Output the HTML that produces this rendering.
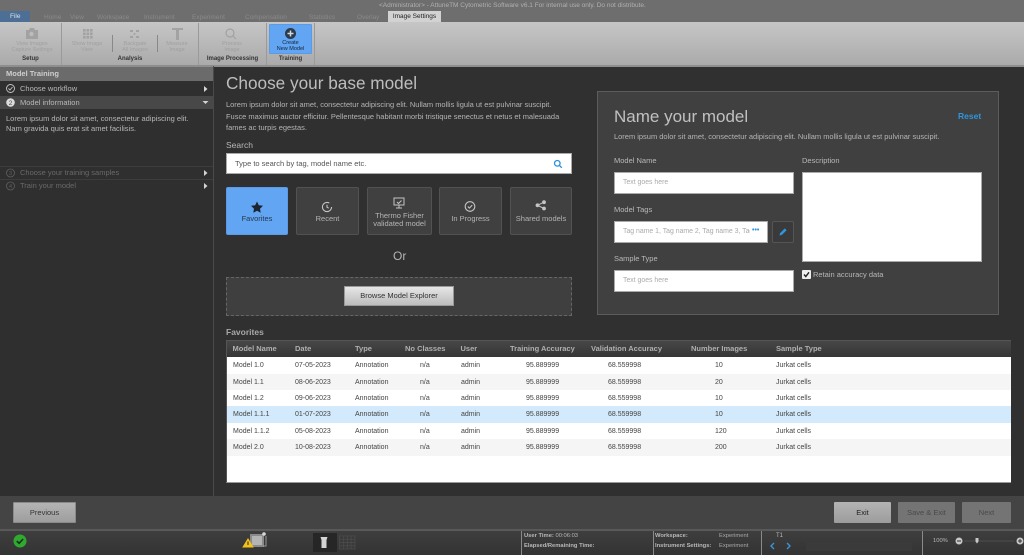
<!DOCTYPE html>
<html><head><meta charset="utf-8">
<style>
*{box-sizing:border-box}
html,body{margin:0;padding:0;width:1024px;height:555px;overflow:hidden;background:#303030;font-family:"Liberation Sans",sans-serif}
#w{position:absolute;left:0;top:0;width:1024px;height:555px;overflow:hidden;filter:blur(.35px)}
.a{position:absolute;white-space:nowrap}
.tab{position:absolute;top:13px;font-size:6.5px;color:#8a8a8a;line-height:9px}
.rb{position:absolute;font-size:5.5px;line-height:6px;color:#a0a0a0;text-align:center;white-space:nowrap}
.rg{position:absolute;top:55px;font-size:6px;font-weight:bold;color:#333;line-height:9px;white-space:nowrap;text-align:center}
.sep{position:absolute;top:23px;width:1px;height:42px;background:#9a9a9a}
.lbl{position:absolute;font-size:7.5px;color:#b8b8b8;white-space:nowrap;line-height:10px}
.inp{position:absolute;background:#fff;border:1px solid #aaa}
.ph{position:absolute;font-size:6.9px;color:#aaa;line-height:10px;white-space:nowrap}
.cat{position:absolute;top:187px;height:48px;background:#404040;border:1px solid #525252;border-radius:2px;color:#b4b4b4;font-size:7.5px;line-height:8px;text-align:center}
.cat span{position:absolute;left:0;right:0}
.row{position:absolute;left:227px;width:784px;height:16.5px;font-size:7px;color:#444;line-height:17px}
.row span,.hd span{position:absolute;white-space:nowrap}
.btn{position:absolute;top:502px;height:21px;font-size:7.5px;line-height:21px;text-align:center;border-radius:1px}
.c3{left:128px}.c4{left:193px}.c5{left:234px}.c6{left:299px}.c7{left:381px}.c8{left:488px}.c9{left:549px}
</style></head>
<body><div id="w">
<!-- title + tabs -->
<div class="a" style="left:0;top:0;width:1024px;height:22px;background:#6e6e6e"></div>
<div class="a" style="left:379px;top:2px;font-size:6.5px;color:#b0b0b0;line-height:8px">&lt;Administrator&gt; - AttuneTM Cytometric Software v6.1 For internal use only. Do not distribute.</div>
<div class="a" style="left:0;top:11px;width:30px;height:11px;background:#4d6f96"></div>
<div class="a" style="left:10px;top:12px;font-size:6.5px;color:#d8e2ee;line-height:9px">File</div>
<div class="tab" style="left:44px">Home</div>
<div class="tab" style="left:70px">View</div>
<div class="tab" style="left:97px">Workspace</div>
<div class="tab" style="left:144px">Instrument</div>
<div class="tab" style="left:192px">Experiment</div>
<div class="tab" style="left:245px">Compensation</div>
<div class="tab" style="left:309px">Statistics</div>
<div class="tab" style="left:357px">Overlay</div>
<div class="a" style="left:388px;top:11px;width:53px;height:11px;background:#d2d2d2;color:#222;font-size:6.5px;line-height:11px;text-align:center">Image Settings</div>

<!-- ribbon -->
<div class="a" style="left:0;top:22px;width:1024px;height:43px;background:linear-gradient(#c6c6c6,#aaaaaa)"></div>
<div class="a" style="left:0;top:65px;width:1024px;height:2px;background:#8e8e8e"></div>
<div class="sep" style="left:61px"></div><div class="sep" style="left:198px"></div><div class="sep" style="left:266px"></div><div class="sep" style="left:314px"></div>
<div class="sep" style="left:112px;top:35px;height:17px;background:#888"></div><div class="sep" style="left:157px;top:35px;height:17px;background:#888"></div>
<svg class="a" style="left:0;top:22px" width="200" height="20" viewBox="0 0 200 20" fill="#a2a2a2">
<path d="M26 8h3l1-2h4l1 2h3v9H26z"/><circle cx="31.500" cy="12" r="2.200" fill="#bcbcbc"/>
<g><rect x="83" y="7" width="2.600" height="2.600"/><rect x="86.500" y="7" width="2.600" height="2.600"/><rect x="90" y="7" width="2.600" height="2.600"/><rect x="83" y="10.500" width="2.600" height="2.600"/><rect x="86.500" y="10.500" width="2.600" height="2.600"/><rect x="90" y="10.500" width="2.600" height="2.600"/><rect x="83" y="14" width="2.600" height="2.600"/><rect x="86.500" y="14" width="2.600" height="2.600"/><rect x="90" y="14" width="2.600" height="2.600"/></g>
<g><rect x="130" y="8" width="3" height="2"/><rect x="136" y="8" width="3" height="2"/><rect x="130" y="14" width="3" height="2"/><rect x="136" y="14" width="3" height="2"/><circle cx="134.500" cy="12" r="1"/></g>
<path d="M172 6h11v2h-4v10h-3V8h-4z"/>
</svg>
<svg class="a" style="left:222px;top:27px" width="18" height="14" viewBox="0 0 18 14" fill="none" stroke="#a2a2a2" stroke-width="1.200"><circle cx="8" cy="6" r="4"/><path d="M11 9l3 3"/></svg>
<div class="rb" style="left:10px;top:41px;width:44px">View Images<br>Capture Settings</div>
<div class="rb" style="left:67px;top:41px;width:40px">Show Image<br>View</div>
<div class="rb" style="left:115px;top:41px;width:40px">Backgate<br>All Images</div>
<div class="rb" style="left:158px;top:41px;width:38px">Measure<br>Image</div>
<div class="rb" style="left:212px;top:41px;width:40px">Process<br>Image</div>
<div class="rg" style="left:0;width:61px">Setup</div>
<div class="rg" style="left:62px;width:136px">Analysis</div>
<div class="rg" style="left:199px;width:67px">Image Processing</div>
<div class="rg" style="left:267px;width:47px">Training</div>
<div class="a" style="left:269px;top:24px;width:43px;height:30px;background:#62a5f3;border:1px solid #5a9ae6;border-radius:1px"></div>
<svg class="a" style="left:284px;top:27px" width="13" height="13" viewBox="0 0 13 13"><circle cx="6.500" cy="6.500" r="5.500" fill="#2c3a4a"/><path d="M6.500 3.500v6M3.500 6.500h6" stroke="#cfd8e2" stroke-width="1.500"/></svg>
<div class="rb" style="left:269px;top:40px;width:43px;color:#10233a">Create<br>New Model</div>

<!-- left panel -->
<div class="a" style="left:0;top:67px;width:213px;height:429px;background:#2f2f2f"></div>
<div class="a" style="left:213px;top:66px;width:1px;height:430px;background:#4a4a4a"></div>
<div class="a" style="left:0;top:67px;width:213px;height:14px;background:#6b6b6b;color:#cfcfcf;font-size:7.5px;font-weight:bold;line-height:14px;padding-left:6px">Model Training</div>
<div class="a" style="left:0;top:81px;width:213px;height:15px;background:#2f2f2f;color:#b8b8b8;font-size:7.5px;line-height:15px;padding-left:20px">Choose workflow</div>
<div class="a" style="left:0;top:96px;width:213px;height:13px;background:#484848;color:#b8b8b8;font-size:7.500px;line-height:13px;padding-left:20px">Model information</div>
<div class="a" style="left:6px;top:114px;font-size:7.5px;line-height:10px;color:#b8b8b8">Lorem ipsum dolor sit amet, consectetur adipiscing elit.<br>Nam gravida quis erat sit amet facilisis.</div>
<div class="a" style="left:0;top:166px;width:213px;height:1px;background:#3d3d3d"></div>
<div class="a" style="left:0;top:179px;width:213px;height:1px;background:#3d3d3d"></div>
<div class="a" style="left:20px;top:168px;color:#696969;font-size:7.5px;line-height:10px">Choose your training samples</div>
<div class="a" style="left:20px;top:181px;color:#696969;font-size:7.5px;line-height:10px">Train your model</div>
<svg class="a" style="left:0;top:81px" width="213" height="112" viewBox="0 0 213 112">
<g fill="none" stroke="#c4c4c4" stroke-width=".9"><circle cx="10.500" cy="7.500" r="4"/><path d="M8.500 7.500l1.500 1.500 2.500-3"/></g>
<circle cx="10.500" cy="21.500" r="4.300" fill="#dcdcdc"/><text x="10.500" y="24" font-size="6.500" font-family="Liberation Sans" text-anchor="middle" fill="#484848">2</text>
<g fill="none" stroke="#5f5f5f" stroke-width=".8"><circle cx="10.500" cy="92" r="4"/><circle cx="10.500" cy="105" r="4"/></g>
<text x="10.500" y="94" font-size="5.500" font-family="Liberation Sans" text-anchor="middle" fill="#5f5f5f">3</text><text x="10.500" y="107" font-size="5.500" font-family="Liberation Sans" text-anchor="middle" fill="#5f5f5f">4</text>
<g fill="#d4d4d4"><path d="M204 5l3.500 3-3.500 3z"/><path d="M204 89l3.500 3-3.500 3z"/><path d="M204 102l3.500 3-3.500 3z"/><path d="M202.500 20h6l-3 3z"/></g>
</svg>

<!-- main -->
<div class="a" style="left:226px;top:73px;font-size:17.200px;line-height:20px;color:#bdbdbd">Choose your base model</div>
<div class="a" style="left:226px;top:99px;font-size:7.470px;line-height:11.500px;color:#b4b4b4">Lorem ipsum dolor sit amet, consectetur adipiscing elit. Nullam mollis ligula ut est pulvinar suscipit.<br>Fusce maximus auctor efficitur. Pellentesque habitant morbi tristique senectus et netus et malesuada<br>fames ac turpis egestas.</div>
<div class="lbl" style="left:226px;top:140px;font-size:8.500px">Search</div>
<div class="inp" style="left:226px;top:153px;width:346px;height:21px"></div>
<div class="a" style="left:235px;top:158px;font-size:7.500px;line-height:11px;color:#555">Type to search by tag, model name etc.</div>
<svg class="a" style="left:553px;top:159px" width="10" height="10" viewBox="0 0 10 10" fill="none" stroke="#2f8fd8" stroke-width="1.300"><circle cx="4.300" cy="4.300" r="2.800"/><path d="M6.500 6.500l2.300 2.300"/></svg>

<div class="cat" style="left:226px;width:62px;background:#62a5f3;border-color:#5a9ae6;color:#26384e"><span style="top:27px">Favorites</span></div>
<div class="cat" style="left:296px;width:63px"><span style="top:27px">Recent</span></div>
<div class="cat" style="left:367px;width:65px"><span style="top:24px">Thermo Fisher<br>validated model</span></div>
<div class="cat" style="left:439px;width:63px"><span style="top:27px">In Progress</span></div>
<div class="cat" style="left:510px;width:62px"><span style="top:27px">Shared models</span></div>
<svg class="a" style="left:226px;top:187px" width="346" height="28" viewBox="0 0 346 28">
<path d="M31 14.500l1.800 3.700 4.200.6-3 2.900.7 4.100-3.700-2-3.700 2 .7-4.100-3-2.900 4.200-.6z" fill="#1c2430"/>
<g fill="none" stroke="#c4c4c4" stroke-width="1.100"><circle cx="101" cy="20" r="4.600" stroke-dasharray="24 5"/><path d="M101 17.800v2.400l1.700 1"/></g>
<g fill="none" stroke="#c4c4c4" stroke-width="1"><rect x="168" y="11" width="10" height="7"/><path d="M170 21h6M173 18v3M171 15l1.500 1.500 3-3"/></g>
<g fill="none" stroke="#c4c4c4" stroke-width="1.100"><circle cx="244" cy="19.500" r="4.800"/><path d="M241.800 19.500l1.600 1.600 2.800-3"/></g>
<g fill="#c4c4c4"><circle cx="311.500" cy="18.300" r="1.900"/><circle cx="318" cy="15.200" r="1.900"/><circle cx="318" cy="21.500" r="1.900"/><path d="M311.500 18.300l6.500-3.100M311.500 18.300l6.500 3.200" stroke="#c4c4c4"/></g>
</svg>
<div class="a" style="left:393px;top:249px;font-size:12px;line-height:15px;color:#b4b4b4">Or</div>
<div class="a" style="left:226px;top:277px;width:346px;height:39px;background:#3f3f3f;border:1px dashed #666"></div>
<div class="a" style="left:344px;top:286px;width:110px;height:20px;background:linear-gradient(#e6e6e6,#bcbcbc);border:1px solid #999;font-size:7.5px;line-height:18px;text-align:center;color:#333">Browse Model Explorer</div>

<!-- name panel -->
<div class="a" style="left:597px;top:91px;width:402px;height:224px;background:#404040;border:1px solid #5c5c5c"></div>
<div class="a" style="left:614px;top:107px;font-size:17px;line-height:20px;color:#c0c0c0">Name your model</div>
<div class="a" style="left:958px;top:111px;font-size:8.500px;font-weight:bold;line-height:10px;color:#2f95de">Reset</div>
<div class="a" style="left:614px;top:132px;font-size:7.470px;line-height:10px;color:#b4b4b4">Lorem ipsum dolor sit amet, consectetur adipiscing elit. Nullam mollis ligula ut est pulvinar suscipit.</div>
<div class="lbl" style="left:614px;top:156px">Model Name</div>
<div class="lbl" style="left:802px;top:156px">Description</div>
<div class="inp" style="left:614px;top:172px;width:180px;height:22px"></div>
<div class="ph" style="left:623px;top:178px">Text goes here</div>
<div class="inp" style="left:802px;top:172px;width:180px;height:90px"></div>
<div class="lbl" style="left:614px;top:205px">Model Tags</div>
<div class="inp" style="left:614px;top:221px;width:154px;height:22px"></div>
<div class="ph" style="left:623px;top:227px;width:127px;overflow:hidden">Tag name 1, Tag name 2, Tag name 3, Tag</div>
<div class="a" style="left:752px;top:226px;font-size:7px;font-weight:bold;line-height:10px;color:#2f95de">•••</div>
<div class="a" style="left:772px;top:221px;width:22px;height:22px;background:#3a3a3a;border:1px solid #555;border-radius:2px"></div>
<svg class="a" style="left:778px;top:227px" width="10" height="10" viewBox="0 0 10 10"><path d="M1.500 8.500l.6-2.400L6.800 1.400l1.800 1.800-4.700 4.700z" fill="#2f95de"/></svg>
<div class="lbl" style="left:614px;top:254px">Sample Type</div>
<div class="inp" style="left:614px;top:270px;width:180px;height:22px"></div>
<div class="ph" style="left:623px;top:276px">Text goes here</div>
<div class="a" style="left:802px;top:270px;width:9px;height:9px;background:#eee;border-radius:1px"></div>
<svg class="a" style="left:802px;top:270px" width="9" height="9" viewBox="0 0 9 9"><path d="M2 4.500l1.800 2L7 2.300" fill="none" stroke="#222" stroke-width="1.400"/></svg>
<div class="lbl" style="left:813px;top:270px">Retain accuracy data</div>

<!-- table -->
<div class="a" style="left:226px;top:327px;font-size:8.500px;font-weight:bold;line-height:10px;color:#a8a8a8">Favorites</div>
<div class="a" style="left:226px;top:340px;width:785px;height:143px;background:#fff;border:1px solid #555;border-right:0;border-bottom:1px solid #999"></div>
<div class="a hd" style="left:227px;top:341px;width:784px;height:16px;background:linear-gradient(#474747,#353535);color:#b0b0b0;font-size:7.500px;font-weight:bold;line-height:16px">
<span style="left:5.500px">Model Name</span><span style="left:68px">Date</span><span style="left:128px">Type</span><span style="left:178px">No Classes</span><span style="left:233.500px">User</span><span style="left:283px">Training Accuracy</span><span style="left:364px">Validation Accuracy</span><span style="left:464px">Number Images</span><span style="left:549px">Sample Type</span></div>
<div class="row" style="top:357px;background:#fff"><span style="left:6px">Model 1.0</span><span style="left:68px">07-05-2023</span><span class="c3">Annotation</span><span class="c4">n/a</span><span class="c5">admin</span><span class="c6">95.889999</span><span class="c7">68.559998</span><span class="c8">10</span><span class="c9">Jurkat cells</span></div>
<div class="row" style="top:373.500px;background:#f5f5f5"><span style="left:6px">Model 1.1</span><span style="left:68px">08-06-2023</span><span class="c3">Annotation</span><span class="c4">n/a</span><span class="c5">admin</span><span class="c6">95.889999</span><span class="c7">68.559998</span><span class="c8">20</span><span class="c9">Jurkat cells</span></div>
<div class="row" style="top:390px;background:#fff"><span style="left:6px">Model 1.2</span><span style="left:68px">09-06-2023</span><span class="c3">Annotation</span><span class="c4">n/a</span><span class="c5">admin</span><span class="c6">95.889999</span><span class="c7">68.559998</span><span class="c8">10</span><span class="c9">Jurkat cells</span></div>
<div class="row" style="top:406px;background:#d2eafb"><span style="left:6px">Model 1.1.1</span><span style="left:68px">01-07-2023</span><span class="c3">Annotation</span><span class="c4">n/a</span><span class="c5">admin</span><span class="c6">95.889999</span><span class="c7">68.559998</span><span class="c8">10</span><span class="c9">Jurkat cells</span></div>
<div class="row" style="top:422.500px;background:#fff"><span style="left:6px">Model 1.1.2</span><span style="left:68px">05-08-2023</span><span class="c3">Annotation</span><span class="c4">n/a</span><span class="c5">admin</span><span class="c6">95.889999</span><span class="c7">68.559998</span><span class="c8">120</span><span class="c9">Jurkat cells</span></div>
<div class="row" style="top:439px;background:#f5f5f5"><span style="left:6px">Model 2.0</span><span style="left:68px">10-08-2023</span><span class="c3">Annotation</span><span class="c4">n/a</span><span class="c5">admin</span><span class="c6">95.889999</span><span class="c7">68.559998</span><span class="c8">200</span><span class="c9">Jurkat cells</span></div>

<!-- bottom bar -->
<div class="a" style="left:0;top:496px;width:1024px;height:33px;background:#444"></div>
<div class="a" style="left:0;top:529px;width:1024px;height:2px;background:#595959"></div>
<div class="a" style="left:0;top:531px;width:1024px;height:24px;background:linear-gradient(#3e3e3e,#333)"></div>
<div class="btn" style="left:13px;width:63px;background:linear-gradient(#b4b4b4,#9e9e9e);border:1px solid #8a8a8a;color:#333;line-height:19px">Previous</div>
<div class="btn" style="left:834px;width:57px;background:linear-gradient(#b4b4b4,#9c9c9c);color:#222">Exit</div>
<div class="btn" style="left:898px;width:57px;background:#747474;color:#4a4a4a">Save &amp; Exit</div>
<div class="btn" style="left:962px;width:49px;background:#747474;color:#4a4a4a">Next</div>

<!-- status -->
<svg class="a" style="left:0;top:531px" width="400" height="24" viewBox="0 0 400 24">
<circle cx="20" cy="10" r="6.500" fill="#2faa2f"/><path d="M16.800 10l2.300 2.300 4-4.300" fill="none" stroke="#16331a" stroke-width="1.600"/>
<rect x="250" y="3" width="14" height="13" fill="#8a8a8a"/><rect x="252" y="5" width="10" height="9" fill="#b4b4b4"/>
<path d="M266 5v10h-3" stroke="#999" fill="none"/><circle cx="264" cy="3" r="1.800" fill="#d8d8d8"/>
<path d="M248 7l5.800 9.500h-11.600z" fill="#f2c21a"/><path d="M248 10.500v3.500" stroke="#222" stroke-width="1"/>
<rect x="313" y="2" width="24" height="19" fill="#262626"/><path d="M320.500 6h7l-1 3v8h-5V9z" fill="#d4d4d4"/>
<g stroke="#4d4d4d" stroke-width=".7" fill="#3a3a3a"><rect x="339.500" y="5" width="15.500" height="13"/><path d="M339.500 8.200h15.500M339.500 11.500h15.500M339.500 14.800h15.500M343.400 5v13M347.300 5v13M351.100 5v13" fill="none"/></g>
</svg>
<div class="a" style="left:521px;top:531px;width:1px;height:24px;background:#8a8a8a"></div>
<div class="a" style="left:653px;top:531px;width:1px;height:24px;background:#8a8a8a"></div>
<div class="a" style="left:761px;top:531px;width:1px;height:24px;background:#8a8a8a"></div>
<div class="a" style="left:922px;top:531px;width:1px;height:24px;background:#8a8a8a"></div>
<div class="a" style="left:524px;top:532px;font-size:5.800px;line-height:9.500px;color:#b8b8b8"><b>User Time:</b> 00:06:03<br><b>Elapsed/Remaining Time:</b></div>
<div class="a" style="left:655px;top:532px;font-size:5.800px;line-height:9.500px;color:#b8b8b8;font-weight:bold">Workspace:<br>Instrument Settings:</div>
<div class="a" style="left:719px;top:532px;font-size:5.800px;line-height:9.500px;color:#a8a8a8">Experiment<br>Experiment</div>
<div class="a" style="left:776px;top:532px;font-size:6px;line-height:9px;color:#b8b8b8">T1</div>
<svg class="a" style="left:768px;top:541px" width="26" height="10" viewBox="0 0 26 10" fill="none" stroke="#3a93d8" stroke-width="1.400"><path d="M6 2L3 5l3 3M19 2l3 3-3 3"/></svg>
<div class="a" style="left:806px;top:542px;width:106px;height:9px;background:#3a3a3a"></div>
<div class="a" style="left:933px;top:537px;font-size:5.800px;line-height:9px;color:#b8b8b8">100%</div>
<svg class="a" style="left:952px;top:534px" width="72" height="14" viewBox="0 0 72 14"><circle cx="7" cy="7" r="3.500" fill="#c8c8c8"/><path d="M5 7h4" stroke="#333"/><path d="M12 7h50" stroke="#4d4d4d"/><path d="M23.500 4h3v3.500l-1.500 2-1.500-2z" fill="#c8c8c8"/><circle cx="68" cy="7" r="3.500" fill="#c8c8c8"/><path d="M66 7h4M68 5v4" stroke="#333"/></svg>
</div></body></html>
